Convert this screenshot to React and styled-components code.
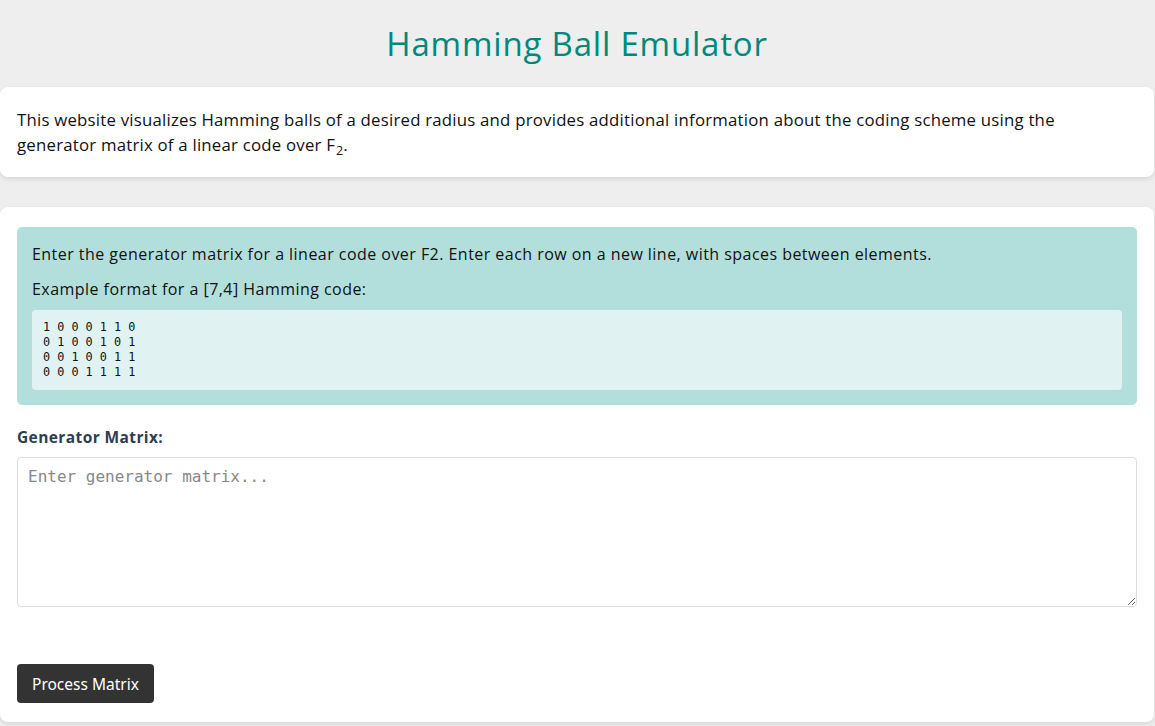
import React from "react";
import styled, { createGlobalStyle } from "styled-components";

const Global = createGlobalStyle`
  html, body { margin: 0; padding: 0; }
  body {
    background: #eeeeee;
    font-family: "Open Sans", "Noto Sans", sans-serif;
    color: #111;
  }
  * { box-sizing: border-box; }
`;

const Page = styled.div`
  display: flex;
  flex-direction: column;
  width: 1154px;
  padding-bottom: 4px;
`;

const Title = styled.h1`
  margin: 0;
  height: 87px;
  display: flex;
  align-items: center;
  justify-content: center;
  font-size: 33px;
  font-weight: 400;
  letter-spacing: 0.8px;
  color: #00897b;
`;

const Card = styled.section`
  background: #fff;
  border-radius: 8px;
  box-shadow: 0 2px 5px rgba(0, 0, 0, 0.1);
  padding: ${(p) => p.$pad || "17px"};
  margin-bottom: ${(p) => p.$mb || "0"};
`;

const Intro = styled.p`
  margin: 0;
  font-size: 16.8px;
  letter-spacing: 0.22px;
  line-height: 25px;
`;

const Sub = styled.span`
  display: inline-block;
  font-size: 12.5px;
  letter-spacing: 0;
  line-height: 12px;
  vertical-align: -4px;
  margin-left: 1px;
`;

const InfoBox = styled.div`
  background: #b2dfdb;
  border-radius: 5px;
  padding: 15px;
  display: flex;
  flex-direction: column;
`;

const InfoText = styled.p`
  margin: 0 0 ${(p) => p.$mb || "10px"};
  font-size: 16px;
  letter-spacing: 0.46px;
  line-height: 25px;
`;

const Code = styled.pre`
  margin: 0;
  background: #e0f2f1;
  border-radius: 4px;
  padding: 10px 11px;
  font-family: "DejaVu Sans Mono", monospace;
  font-size: 11.8px;
  line-height: 15px;
  color: #111;
`;

const Label = styled.label`
  display: block;
  margin: 21px 0 9px;
  font-weight: 700;
  font-size: 15.5px;
  letter-spacing: 0.4px;
  line-height: 22px;
  color: #2c3e50;
`;

const TextArea = styled.textarea`
  display: block;
  width: 100%;
  height: 150px;
  border: 1px solid #dddddd;
  border-radius: 4px;
  padding: 10px;
  font-family: "DejaVu Sans Mono", monospace;
  font-size: 16px;
  line-height: 18px;
  resize: vertical;
  &::placeholder {
    color: #888;
  }
`;

const Button = styled.button`
  margin-top: 57px;
  align-self: flex-start;
  background: #333333;
  color: #fff;
  border: none;
  border-radius: 4px;
  padding: 0 15px;
  height: 39px;
  font-family: "Noto Sans", "Open Sans", sans-serif;
  font-size: 15.5px;
`;

const Form = styled.div`
  display: flex;
  flex-direction: column;
`;

const example = `1 0 0 0 1 1 0
0 1 0 0 1 0 1
0 0 1 0 0 1 1
0 0 0 1 1 1 1`;

export default function App() {
  return (
    <>
      <Global />
      <Page>
        <Title>Hamming Ball Emulator</Title>
        <Card $pad="20px 17px 20px" $mb="30px">
          <Intro>
            This website visualizes Hamming balls of a desired radius and provides additional
            information about the coding scheme using the generator matrix of a linear code over F
            <Sub>2</Sub>.
          </Intro>
        </Card>
        <Card $pad="20px 17px 19px">
          <Form>
            <InfoBox>
              <InfoText>
                Enter the generator matrix for a linear code over F2. Enter each row on a new line,
                with spaces between elements.
              </InfoText>
              <InfoText $mb="8px">Example format for a [7,4] Hamming code:</InfoText>
              <Code>{example}</Code>
            </InfoBox>
            <Label htmlFor="gm">Generator Matrix:</Label>
            <TextArea id="gm" placeholder="Enter generator matrix..." />
            <Button>Process Matrix</Button>
          </Form>
        </Card>
      </Page>
    </>
  );
}
